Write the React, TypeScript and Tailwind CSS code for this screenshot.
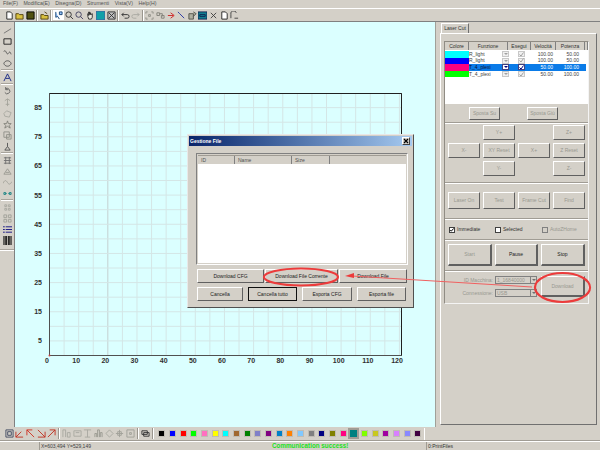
import React from "react";

const T = ({ d, c = "#404040", f }: { d: string; c?: string; f?: string }) => (
  <svg width="9" height="9" viewBox="0 0 10 10" fill="none" stroke={c} strokeWidth="1">
    <path d={d} fill={f ?? "none"} />
  </svg>
);

const Sep = ({ className = "mx-[1px]" }: { className?: string }) => (
  <div className={`w-[2px] h-[11px] bg-[#9a968e] border-r border-white ${className}`} />
);
const HSep = () => <div className="w-[12px] h-[2px] shrink-0 bg-[#a8a49c] border-b border-white" />;

const topGroups: { d: string; c?: string; f?: string; w?: boolean }[][] = [
  [
    { d: "M2 1h4l2 2v6H2z", c: "#202020", f: "#fff" },
    { d: "M1 3h3l1 1h4v5H1z", c: "#504010", f: "#d8c040" },
    { d: "M1 1h8v8H1z", c: "#000", f: "#505010" },
  ],
  [{ d: "M1 4h3l1 1h4v4H1zM5 1l3 2", c: "#504010", f: "#d8c040" }],
  [
    { d: "M2 1v6l2-1 2 3M6 1h3v3H6z", c: "#104070", f: "#a0c8ff", w: true },
    { d: "M1 4a3 3 0 1 0 6 0a3 3 0 1 0-6 0M6 6l3 3", c: "#303030" },
    { d: "M1 4a3 3 0 1 0 6 0a3 3 0 1 0-6 0M6 6l3 3", c: "#404060" },
    { d: "M2 6V3l1 2V1l1 3V1l1 3V2l1 2 1-1v4L6 9H3z", c: "#303030", f: "#e8e8e0" },
    { d: "M0 0h10v10H0z", c: "#5050a0", f: "#10a0a8" },
    { d: "M1 1h8v8H1zM2 2l6 6M8 2l-6 6", c: "#303030", f: "#c0c0c0" },
  ],
  [
    { d: "M3 2L1 4l2 2M1 4h6a2 2 0 0 1 0 4H4", c: "#303030" },
    { d: "M7 2l2 2-2 2M9 4H3a2 2 0 0 0 0 4h3", c: "#a8a8a0" },
  ],
  [
    { d: "M1 1h2M7 1h2M1 9h2M7 9h2M1 1v2M1 7v2M9 1v2M9 7v2M4 4h2v2H4z", c: "#909088" },
    { d: "M1 2h3v3H1zM6 5h3v3H6zM4 3h3v3", c: "#808078" },
    { d: "M1 5h6M4 2l4 3-4 3", c: "#d02020" },
    { d: "M1 1l2 2 5 5", c: "#2030a0" },
    { d: "M1 3h5v6H1zM6 1l3 2-3 3", c: "#505048", f: "#b0b0a0" },
    { d: "M0 1h10v8H0zM2 4h6v2H2z", c: "#102050", f: "#108090" },
    { d: "M2 2l6 6M8 2L2 8", c: "#404040" },
    { d: "M2 1h4l2 2v6H2z", c: "#202020", f: "#fff" },
    { d: "M1 8V4a3 3 0 0 1 6-2M5 8h4", c: "#404040" },
  ],
];

const leftGroups: { d: string; c?: string; f?: string }[][] = [
  [
    { d: "M1 8l8-5", c: "#707070" },
    { d: "M1 2h8v6H1z", c: "#202020" },
    { d: "M1 4c2-4 3 5 5 2s2-1 3 1", c: "#505050" },
    { d: "M1 5c1-4 7-4 8 0c-1 4-7 4-8 0z", c: "#505050" },
  ],
  [{ d: "M1 9L5 1l4 8M3 6h4", c: "#102080" }],
  [
    { d: "M2 6a3 3 0 1 0 1-4M3 0v3h3", c: "#606060" },
    { d: "M5 1v8M2 3l3-2 3 2M3 7h4", c: "#a4a49a" },
    { d: "M1 5l3-3 5 2-2 5-5-1z", c: "#a8a8a0" },
    { d: "M5 1l1 3h3L7 6l1 3-3-2-3 2 1-3-2-2h3z", c: "#808078" },
    { d: "M1 1h6v6H1zM4 4h5v5H4z", c: "#909088" },
    { d: "M5 1v4L2 9h6L5 5", c: "#505050" },
  ],
  [
    { d: "M1 2h8M1 5h8M1 8h8M3 1v8M7 1v8", c: "#707070" },
    { d: "M1 8l4-6 4 6zM3 6h4", c: "#9a9a92" },
    { d: "M0 6c2-4 3-4 5-1s3 2 5-1", c: "#a0a098" },
    { d: "M1 4h2v2H1zM7 4h2v2H7zM3 5h1M6 5h1", c: "#108080" },
  ],
  [
    { d: "M2 2h2v2H2zM6 2h2v2H6zM2 6h2v2H2zM6 6h2v2H6z", c: "#a8a8a0" },
    { d: "M1 1h3v3H1zM6 1h3v3H6zM1 6h3v3H1zM6 6h3v3H6z", c: "#a0a098" },
    { d: "M0 2h2M0 5h2M0 8h2M3 2h7M3 5h7M3 8h7", c: "#101080" },
    { d: "M1 0v10M4 0v10M6 0v10M9 0v10M2.5 0v10M7.5 0v10", c: "#000" },
  ],
];

const bottomIcons: { d: string; c?: string }[] = [
  { d: "M1 1h8v8H1zM3 3h4v4H3z", c: "#404860" },
  { d: "M1 9h8M1 9V3M1 9l6-6", c: "#c03020" },
  { d: "M1 1h6M1 1v6M1 1l8 8", c: "#d03020" },
  { d: "M1 9h8M9 9V3M1 1l8 8", c: "#c03020" },
  { d: "M3 1h6v6M9 1L1 9", c: "#c03020" },
];
const bottomIcons2: { d: string; c?: string }[] = [
  { d: "M1 1h3v8M1 1v8M6 4h3v5H6z", c: "#a8a8a0" },
  { d: "M1 2h8v6H1zM3 4h4", c: "#a8a8a0" },
  { d: "M1 1h8M5 1v8M2 9h6", c: "#a8a8a0" },
  { d: "M1 9V5h2v4M4 9V1h2v8M7 9V4h2v5", c: "#989890" },
  { d: "M1 5l4-4 4 4-4 4z", c: "#a8a8a0" },
  { d: "M5 1v8M1 5h8M3 3h4v4H3z", c: "#a0a098" },
  { d: "M1 1h8v8H1zM4 4h2v2H4z", c: "#a0a098" },
];

const swatches = ["#000000", "#0000ff", "#ff0000", "#00ff00", "#ff70c0", "#ffff00", "#00ffff", "#a06830", "#008000", "#8080c8", "#800080", "#0080c8", "#ff8000", "#80c8ff", "#808080", "#000080", "#808000", "#ff0080", "#008080", "#80ff00", "#c8c820", "#a000a0", "#d880ff", "#8888ff", "#400040"];

const W98 = ({ className = "", dis = false, children }: { className?: string; dis?: boolean; children: React.ReactNode }) => (
  <div className={`flex items-center justify-center whitespace-nowrap bg-[#d4d0c8] border border-t-white border-l-white border-r-[#606060] border-b-[#606060] text-[5px] leading-none ${dis ? "text-[#989890]" : "text-[#202020]"} ${className}`}>
    {children}
  </div>
);

const Divider = () => <div className="h-[2px] shrink-0 bg-[#a09c94] border-b border-white mx-[-3px]" />;

const rows = [
  { col: "#00ffff", n: "R_light", v: "100.00", p: "50.00" },
  { col: "#0000ff", n: "R_light", v: "100.00", p: "50.00" },
  { col: "#ff0080", n: "T_4_plexi", v: "50.00", p: "100.00", sel: true },
  { col: "#00ff00", n: "T_4_plexi", v: "50.00", p: "100.00" },
];

function Chart() {
  const X0 = 49.5;
  const Y0 = 355.5;
  const step = 14.58;
  const xs = Array.from({ length: 25 }, (_, i) => i);
  const ys = Array.from({ length: 18 }, (_, i) => i);
  const left = 15;
  const top = 22;
  return (
    <svg width="421" height="405" className="block" style={{ fontFamily: "'Liberation Sans', sans-serif" }}>
      <g transform={`translate(${-left} ${-top})`}>
        {xs.slice(1).map((i) => (
          <line key={i} x1={X0 + i * step} x2={X0 + i * step} y1={93} y2={Y0} stroke={i === 4 ? "#c4d0d0" : "#d4e6e6"} strokeWidth="1" />
        ))}
        {ys.slice(1).map((i) => (
          <line key={i} y1={Y0 - i * step} y2={Y0 - i * step} x1={X0} x2={401} stroke="#d4e6e6" strokeWidth="1" />
        ))}
        <path d={`M${X0} ${Y0}V93.5H401.5V${Y0}H${X0}`} fill="none" stroke="#505050" />
        <path d={`M${X0} 93.5H401.5V${Y0}`} fill="none" stroke="#202020" />
        {[85, 75, 65, 55, 45, 35, 25, 15, 5].map((v) => (
          <text key={v} x="42" y={Y0 - (v * step) / 5 + 2.5} textAnchor="end" fontSize="7" fontWeight="bold" fill="#303030">
            {v}
          </text>
        ))}
        {Array.from({ length: 13 }, (_, i) => i).map((i) => (
          <text key={i} x={47 + i * 29.17} y="363" textAnchor="middle" fontSize="7" fontWeight="bold" fill="#303030">
            {i * 10}
          </text>
        ))}
        <circle cx={X0} cy={Y0} r="1" fill="#d04040" />
      </g>
    </svg>
  );
}

const Cell = ({ white, children }: { white?: boolean; children: React.ReactNode }) => (
  <div className={`w-[10.6px] h-[10px] flex items-center justify-center ${white ? "bg-white" : ""}`}>{children}</div>
);

export default function App() {
  return (
    <div className="relative w-[600px] h-[450px] overflow-hidden bg-[#d4d0c8] flex flex-col font-['Liberation_Sans',sans-serif] text-[#303030]">
      {/* menu */}
      <div className="h-[9px] flex items-center gap-[5.5px] pl-[3px] text-[5.2px] leading-none text-[#505050] border-b border-white">
        {["File(F)", "Modifica(E)", "Disegna(D)", "Strumenti", "Vista(V)", "Help(H)"].map((m) => (
          <span key={m}>{m}</span>
        ))}
      </div>
      {/* top toolbar */}
      <div className="h-[13px] flex items-center pl-[4px] border-b border-[#808080]">
        {topGroups.map((g, i) => (
          <React.Fragment key={i}>
            {i > 0 && <Sep className="mx-[0.7px]" />}
            {g.map((t, j) => (
              <Cell key={j} white={t.w}>
                <T d={t.d} c={t.c} f={t.f} />
              </Cell>
            ))}
          </React.Fragment>
        ))}
      </div>
      {/* main */}
      <div className="flex h-[405px]">
        <div className="w-[15px] shrink-0 flex flex-col items-center pt-[3px] gap-[1px] border-r border-[#808080]">
          {leftGroups.map((g, i) => (
            <React.Fragment key={i}>
              {i > 0 && <HSep />}
              {g.map((t, j) => (
                <div key={j} className="w-[10px] h-[10px] shrink-0 flex items-center justify-center">
                  <T d={t.d} c={t.c} f={t.f} />
                </div>
              ))}
            </React.Fragment>
          ))}
          <div className="mt-[3px] w-full"><div className="h-[2px] bg-[#a8a49c] border-b border-white" /></div>
        </div>
        <div className="w-[421px] shrink-0 bg-[#dbffff] border-r border-[#a0a098]">
          <Chart />
        </div>
        {/* right panel */}
        <div className="flex-1 pl-[4px] pr-[3px] pt-[1px] flex flex-col">
          <div className="ml-[1px] w-[28px] h-[10px] flex items-center justify-center bg-[#d4d0c8] border border-b-0 border-t-white border-l-white border-r-[#707070] text-[5px] leading-none text-[#303030] relative z-10">Laser Cut</div>
          <div className="h-[392px] border border-t-white border-l-white border-r-[#707070] border-b-[#707070] pl-[3px] pr-[7px] pt-[7px]">
            <div className="h-[263px] border border-[#908c84] border-b-[#f4f4f4] border-r-[#f4f4f4] flex flex-col px-[3px]">
              {/* list */}
              <div className="h-[62px] bg-white mx-[-3px] flex flex-col shrink-0">
                <div className="h-[8px] flex text-[5px] leading-none bg-[#d4d0c8] text-[#303030]">
                  {[["Colore", "w-[24px]"], ["Funzione", "w-[39px]"], ["Esegui", "w-[23px]"], ["Velocità", "w-[25px]"], ["Potenza", "w-[29px]"], ["", "flex-1"]].map(([t, w], i) => (
                    <div key={i} className={`${w} flex items-center justify-center border-r border-[#808080]`}>{t}</div>
                  ))}
                </div>
                <div className="h-[1px]" />
                {rows.map((r, i) => (
                  <div key={i} className={`w-[141px] h-[6.6px] flex items-center text-[5px] leading-none ${r.sel ? "text-white" : "text-[#404040]"}`}>
                    <div className="w-[24px] h-full" style={{ backgroundColor: r.col }} />
                    <div className={`flex-1 h-full flex items-center ${r.sel ? "bg-[#0a7be8]" : ""}`}>
                      <span className={`w-[33px] whitespace-nowrap ${r.sel ? "text-[#101030]" : ""}`}>{r.n}</span>
                      <span className={`w-[7px] h-[6px] mr-[9px] flex items-center justify-center border ${r.sel ? "bg-white border-[#404080]" : "border-[#c8c8c8] bg-[#f0f0f0]"}`}>
                        <span className={`w-0 h-0 border-x-[2px] border-t-[2px] border-x-transparent ${r.sel ? "border-t-[#000080]" : "border-t-[#a0a0a0]"}`} />
                      </span>
                      <span className={`w-[7px] h-[6px] flex items-center justify-center border ${r.sel ? "bg-white border-[#404080]" : "border-[#c8c8c8] bg-[#f0f0f0]"}`}>
                        <svg width="5" height="5" viewBox="0 0 5 5" fill="none" stroke={r.sel ? "#000080" : "#a0a0a0"}><path d="M.5 2.5l1.5 1.5L4.5.5" /></svg>
                      </span>
                      <span className="w-[28px] text-right">{r.v}</span>
                      <span className="w-[26px] text-right">{r.p}</span>
                    </div>
                  </div>
                ))}
              </div>
              <div className="h-[18px] shrink-0 flex items-center pl-[21px] gap-[27px]">
                <W98 dis className="w-[31px] h-[13px]">Sposta Su</W98>
                <W98 dis className="w-[31px] h-[13px]">Sposta Giù</W98>
              </div>
              <Divider />
              <div className="grid grid-cols-[32px_32px_32px_32px] gap-[3px] pt-[1px] mb-[6px]">
                <div />
                <W98 dis className="h-[15px]">Y+</W98>
                <div />
                <W98 dis className="h-[15px]">Z+</W98>
                <W98 dis className="h-[15px]">X-</W98>
                <W98 dis className="h-[15px]">XY Reset</W98>
                <W98 dis className="h-[15px]">X+</W98>
                <W98 dis className="h-[15px]">Z Reset</W98>
                <div />
                <W98 dis className="h-[15px]">Y-</W98>
                <div />
                <W98 dis className="h-[15px]">Z-</W98>
              </div>
              <Divider />
              <div className="grid grid-cols-[32px_32px_32px_32px] gap-x-[3px] pt-[8px] mb-[9px]">
                {["Laser On", "Test", "Frame Cut", "Find"].map((t) => (
                  <W98 dis key={t} className="h-[17px]">{t}</W98>
                ))}
              </div>
              <Divider />
              <div className="h-[19px] shrink-0 flex items-center text-[5px] leading-none pl-[1px]">
                <span className="w-[46px] flex items-center gap-[2px]">
                  <span className="w-[6px] h-[6px] bg-white border border-[#404040] flex items-center justify-center">
                    <svg width="4" height="4" viewBox="0 0 4 4" fill="none" stroke="#000"><path d="M.3 2l1 1.2L3.7.4" /></svg>
                  </span>
                  Immediate
                </span>
                <span className="w-[47px] flex items-center gap-[2px]">
                  <span className="w-[6px] h-[6px] bg-white border border-[#404040]" />
                  Selected
                </span>
                <span className="flex items-center gap-[2px] text-[#989890]">
                  <span className="w-[6px] h-[6px] border border-[#808080]" />
                  AutoZHome
                </span>
              </div>
              <Divider />
              <div className="grid grid-cols-[44px_43px_44px] gap-x-[3px] pt-[3px] mb-[4px]">
                <W98 dis className="h-[22px] border-r-2 border-b-2">Start</W98>
                <W98 className="h-[22px] border-r-2 border-b-2">Pause</W98>
                <W98 className="h-[22px] border-r-2 border-b-2">Stop</W98>
              </div>
              <Divider />
              <div className="flex items-start pt-[4px]">
                <div className="flex flex-col gap-[5px] text-[5px] leading-none text-[#989890]">
                  {[["ID Macchina:", "1_16840000"], ["Connessione:", "USB"]].map(([l, v]) => (
                    <div key={l} className="flex items-center gap-[2px]">
                      <span className="w-[45px] text-right">{l}</span>
                      <div className="w-[42px] h-[8px] flex items-center justify-between border border-[#808080] pl-[1px]">
                        {v}
                        <span className="w-[6px] h-full bg-[#d4d0c8] border-l border-[#808080] flex items-center justify-center">
                          <span className="w-0 h-0 border-x-[2px] border-t-[2px] border-x-transparent border-t-[#707070]" />
                        </span>
                      </div>
                    </div>
                  ))}
                </div>
                <W98 dis className="ml-[4px] w-[44px] h-[21px] border-r-2 border-b-2">Download</W98>
              </div>
            </div>
          </div>
        </div>
      </div>
      {/* bottom toolbar */}
      <div className="h-[14px] flex items-center pl-[4px] border-b border-[#a09c94]">
        {bottomIcons.map((t, i) => (
          <Cell key={i}><T d={t.d} c={t.c} /></Cell>
        ))}
        <Sep className="mx-[1.2px]" />
        {bottomIcons2.map((t, i) => (
          <Cell key={i}><T d={t.d} c={t.c} /></Cell>
        ))}
        <Sep className="mx-[1.2px]" />
        <Cell><T d="M1 2h6v4H1zM3 4h6v4H3z" c="#303030" /></Cell>
        <Sep className="mx-[1.5px]" />
        <div className="flex items-center gap-[3.67px] ml-[3px]">
          {swatches.map((s, i) => (
            <div key={i} className={`w-[7px] h-[7px] ${i === 18 ? "outline outline-2 outline-[#a09c94]" : "border border-[#c0bcb4]"}`} style={{ backgroundColor: s }} />
          ))}
        </div>
        <div className="w-px h-[12px] bg-white ml-[3px]" />
      </div>
      {/* status */}
      <div className="h-[9px] flex items-center text-[5px] leading-none border-t border-white">
        <div className="w-[40px] h-full border-r border-[#a09c94]" />
        <div className="w-[232px] pl-[1px] text-[#404040]">X=603,494 Y=529,149</div>
        <div className="w-[154px] text-[#20e020] font-bold text-[6.3px]">Communication success!</div>
        <div className="pl-[1px] border-l border-[#a09c94] h-full flex items-center">0:PrintFiles</div>
      </div>

      {/* dialog */}
      <div className="absolute left-[187px] top-[134px] w-[227px] h-[174px] bg-[#d4d0c8] border border-t-[#e8e8e8] border-l-[#e8e8e8] border-r-[#505050] border-b-[#505050] p-[1px] flex flex-col">
        <div className="h-[10px] flex items-center justify-between px-[1px] bg-gradient-to-r from-[#0a246a] to-[#a6caf0] text-white text-[5px] font-bold leading-none">
          Gestione File
          <span className="w-[8px] h-[8px] mr-[1px] bg-[#d4d0c8] border border-t-white border-l-white border-r-[#404040] border-b-[#404040] text-black flex items-center justify-center">
            <svg width="6" height="6" viewBox="0 0 6 6" stroke="#000" strokeWidth="1.2"><path d="M1 1l4 4M5 1L1 5" /></svg>
          </span>
        </div>
        <div className="mt-[7px] ml-[7px] mr-[4px] h-[112px] border border-[#808080] border-b-white border-r-white p-[1px] flex flex-col">
          <div className="h-[9px] flex text-[5px] leading-none text-[#505050] border-t border-[#a09c94]">
            <div className="w-[37px] pl-[3px] flex items-center border-r border-[#808080]">ID</div>
            <div className="w-[57px] pl-[3px] flex items-center border-r border-[#808080]">Name</div>
            <div className="w-[38px] pl-[3px] flex items-center border-r border-[#808080]">Size</div>
          </div>
          <div className="flex-1 bg-white" />
        </div>
        <div className="mt-[4px] ml-[8px] flex gap-[1px]">
          <W98 className="w-[67px] h-[14px]">Download CFG</W98>
          <W98 className="w-[73px] h-[14px]">Download File Corrente</W98>
          <W98 className="w-[68px] h-[14px]">Download File</W98>
        </div>
        <div className="mt-[4px] ml-[8px] flex gap-[5px]">
          <W98 className="w-[46px] h-[14px]">Cancella</W98>
          <W98 className="w-[49px] h-[14px] !border-[#101010]">Cancella tutto</W98>
          <W98 className="w-[50px] h-[14px]">Esporta CFG</W98>
          <W98 className="w-[49px] h-[14px]">Esporta file</W98>
        </div>
      </div>

      {/* red annotations */}
      <svg className="absolute left-0 top-0 pointer-events-none" width="600" height="450" fill="none">
        <ellipse cx="301" cy="277" rx="37" ry="8.5" stroke="#ec3b3b" strokeWidth="2.2" />
        <ellipse cx="562.5" cy="287.5" rx="27.5" ry="14.5" stroke="#ec3b3b" strokeWidth="2.2" />
        <path d="M532 287L352 276" stroke="#f06060" strokeWidth="1" />
        <path d="M345 276l9-3v5z" fill="#ec3b3b" />
      </svg>
    </div>
  );
}
